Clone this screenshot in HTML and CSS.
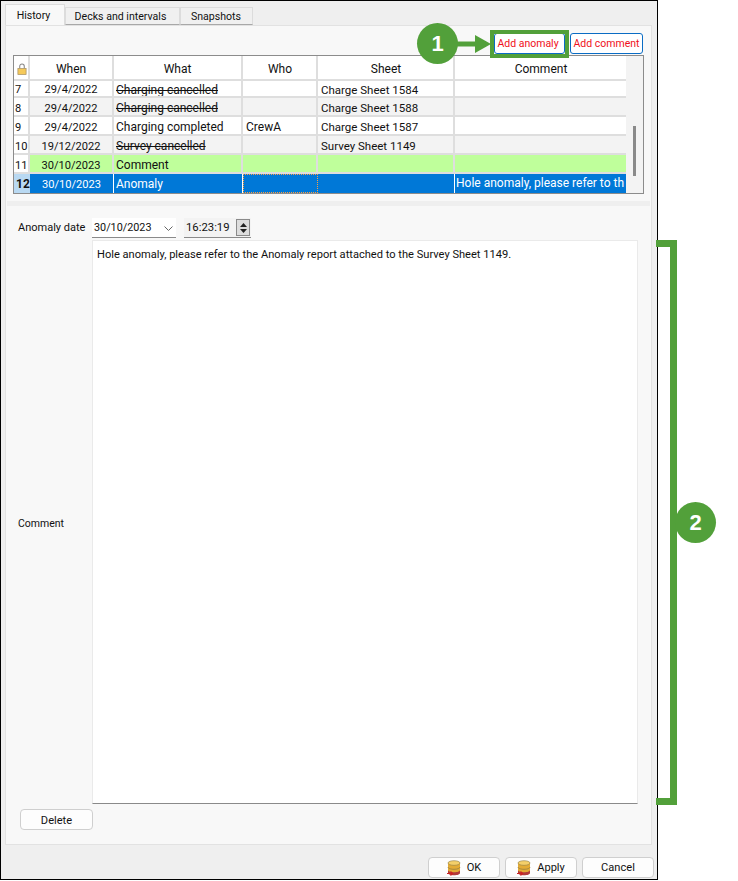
FILE: index.html
```html
<!DOCTYPE html>
<html lang="en">
<head>
<meta charset="utf-8">
<title>History</title>
<link rel="stylesheet" href="styles.css">
</head>
<body>
<div class="window">
  <div class="tabs">
    <div class="tab active">History</div>
    <div class="tab decks">Decks and intervals</div>
    <div class="tab snaps">Snapshots</div>
  </div>
  <div class="pane">
    <div class="top">
      <div class="actions">
        <button class="act anomaly">Add anomaly</button>
        <button class="act">Add comment</button>
      </div>
      <div class="table">
        <div class="grid">
          <div class="row head">
            <div class="c idx lock">
              <svg width="10" height="12" viewBox="0 0 11 13"><path d="M3 6V3.500a2.500 2.500 0 0 1 5 0V6" fill="none" stroke="#8a8a8a" stroke-width="1.200"/><rect x="1" y="6" width="9" height="6.500" fill="#f5c95a" stroke="#a89060" stroke-width=".8"/></svg>
            </div>
            <div class="c when">When</div><div class="c what">What</div><div class="c who">Who</div><div class="c sheet">Sheet</div><div class="c com">Comment</div>
          </div>
          <div class="row first">
            <div class="c idx">7</div><div class="c when">29/4/2022</div><div class="c what"><s>Charging cancelled</s></div><div class="c who"></div><div class="c sheet">Charge Sheet 1584</div><div class="c com"></div>
          </div>
          <div class="row alt">
            <div class="c idx">8</div><div class="c when">29/4/2022</div><div class="c what"><s>Charging cancelled</s></div><div class="c who"></div><div class="c sheet">Charge Sheet 1588</div><div class="c com"></div>
          </div>
          <div class="row">
            <div class="c idx">9</div><div class="c when">29/4/2022</div><div class="c what">Charging completed</div><div class="c who">CrewA</div><div class="c sheet">Charge Sheet 1587</div><div class="c com"></div>
          </div>
          <div class="row alt">
            <div class="c idx">10</div><div class="c when">19/12/2022</div><div class="c what"><s>Survey cancelled</s></div><div class="c who"></div><div class="c sheet">Survey Sheet 1149</div><div class="c com"></div>
          </div>
          <div class="row green">
            <div class="c idx">11</div><div class="c when">30/10/2023</div><div class="c what">Comment</div><div class="c who"></div><div class="c sheet"></div><div class="c com"></div>
          </div>
          <div class="row sel">
            <div class="c idx">12</div><div class="c when">30/10/2023</div><div class="c what">Anomaly</div><div class="c who focus"></div><div class="c sheet"></div><div class="c com clip">Hole anomaly, please refer to th</div>
          </div>
        </div>
        <div class="scroll"><div class="thumb"></div></div>
      </div>
    </div>
    <div class="splitter"></div>
    <div class="form">
      <div class="daterow">
        <span class="lbl date-lbl">Anomaly date</span>
        <div class="field date">30/10/2023
          <svg class="chev" width="9" height="5" viewBox="0 0 9 5"><path d="M.5.500l4 4 4-4" fill="none" stroke="#666"/></svg>
        </div>
        <div class="field time">16:23:19
          <div class="spin"><svg width="7" height="4" viewBox="0 0 7 4"><path d="M3.500 0L7 4H0z" fill="#222"/></svg><svg width="7" height="4" viewBox="0 0 7 4"><path d="M0 0h7L3.500 4z" fill="#222"/></svg></div>
        </div>
      </div>
      <div class="commentrow">
        <span class="lbl com-lbl">Comment</span>
        <div class="text">Hole anomaly, please refer to the Anomaly report attached to the Survey Sheet 1149.</div>
      </div>
      <button class="btn delete">Delete</button>
    </div>
  </div>
  <div class="footer">
    <button class="btn foot">
      <svg width="15" height="16" viewBox="0 0 15 16"><path d="M1 3v10c0 1.300 2.800 2.300 6 2.300s6-1 6-2.300V3z" fill="#b23a3a"/><path d="M1 3v7c0 1.300 2.800 2.300 6 2.300s6-1 6-2.300V3z" fill="#e3ab35"/><ellipse cx="7" cy="3" rx="6" ry="2.300" fill="#f4cf6a" stroke="#8d7a45" stroke-width=".6"/><path d="M1 7c0 1.300 2.800 2.300 6 2.300s6-1 6-2.300" fill="none" stroke="#8d7a45" stroke-width=".7"/><path d="M0 13.500h5M3.500 11.500l2.200 2-2.200 2" fill="none" stroke="#c22" stroke-width="1.100"/></svg>
      OK
    </button>
    <button class="btn foot">
      <svg width="15" height="16" viewBox="0 0 15 16"><path d="M1 3v10c0 1.300 2.800 2.300 6 2.300s6-1 6-2.300V3z" fill="#b23a3a"/><path d="M1 3v7c0 1.300 2.800 2.300 6 2.300s6-1 6-2.300V3z" fill="#e3ab35"/><ellipse cx="7" cy="3" rx="6" ry="2.300" fill="#f4cf6a" stroke="#8d7a45" stroke-width=".6"/><path d="M1 7c0 1.300 2.800 2.300 6 2.300s6-1 6-2.300" fill="none" stroke="#8d7a45" stroke-width=".7"/><path d="M0 13.500h5M3.500 11.500l2.200 2-2.200 2" fill="none" stroke="#c22" stroke-width="1.100"/></svg>
      Apply
    </button>
    <button class="btn foot">Cancel</button>
  </div>

  <div class="note arrow">
    <svg width="35" height="18" viewBox="0 0 35 18"><path d="M0 6.500h18V0l16 9-16 9v-6.500H0z" fill="#52a03a"/></svg>
  </div>
  <div class="note badge one">1</div>
  <div class="note hilite"></div>
  <div class="note bracket"></div>
  <div class="note badge two">2</div>
</div>
</body>
</html>
```
FILE: styles.css
```css
* { box-sizing: border-box; }
html, body { margin: 0; background: #fff; }
body { width: 738px; height: 881px; overflow: hidden; font-family: Roboto, sans-serif; font-size: 11.1px; color: #111; }
button { white-space: nowrap; }
.window { position: relative; width: 658px; height: 880px; background: #efefef; border: 1px solid #000; padding: 3px 5px 0 4px; display: flex; flex-direction: column; }
.tabs { display: flex; height: 21px; align-items: flex-end; position: relative; z-index: 1; font-size: 10.6px; }
.tab { height: 18px; background: #f0f0f0; border: 1px solid #dcdcdc; border-bottom: 1px solid #a8a8a8; line-height: 17px; text-align: center; }
.tab.active { width: 60px; height: 21px; background: #f8f8f8; border-bottom: 0; line-height: 21px; padding-right: 3px; }
.tab.decks { width: 115px; padding-right: 4px; }
.tab.snaps { width: 73px; padding-right: 1px; }
.pane { height: 820px; background: #f8f8f8; border: 1px solid #e2e2e2; display: flex; flex-direction: column; }
.top { height: 174px; padding: 7px 7px 0 7px; flex: none; }
.actions { height: 22px; display: flex; justify-content: flex-end; gap: 5px; margin-right: 1px; }
.act { height: 21px; padding: 0; width: 73px; background: #fff; border: 1px solid #0a6cc4; border-radius: 3px; color: #f01020; font: inherit; font-size: 10.5px; }
.act.anomaly { width: 71px; padding-right: 3px; }
.table { height: 139px; border: 1px solid #8c8c8c; background: #fff; display: flex; }
.grid { width: 612px; flex: none; }
.row { display: grid; grid-template-columns: 16px 84px 129px 75px 137px 171px; height: 19px; }
.row.first { height: 17px; }
.row.first .c { height: 17px; }
.row.head { height: 25px; }
.row.alt { background: #f3f3f3; }
.row.green { background: #bfff9b; }
.row.sel { background: #0078d7; color: #fff; }
.c { border-right: 2px solid #dedede; border-bottom: 2px solid #dedede; padding: 0 2px 0 3px; line-height: 21px; white-space: nowrap; overflow: hidden; font-size: 12px; }
.row.first .c { line-height: 18px; }
.row.head .c { text-align: center; line-height: 27px; font-size: 12px; }
.row .com { border-right: 0; }
.c.when { text-align: center; padding: 0; font-size: 11.1px; }
.c.sheet { font-size: 11.5px; }
.c.what { padding-left: 2px; }
.c.idx { padding: 0 0 0 1px; background: #fff; font-size: 11.1px; }
.c.lock { padding: 7px 0 0 3px; line-height: 0; }
.c.lock svg { display: block; }
.row.sel .c { border-bottom: 0; border-right-color: #fff; border-right-width: 1px; }
.row.sel .com { border-right: 0; padding-left: 1px; line-height: 19px; }
.row.sel .idx { background: #b9d9f2; color: #111; font-weight: 700; border-right: 0; padding-left: 2px; font-size: 12px; }
.row.sel .focus { border: 1px dotted #ffa040; }
.scroll { flex: 1; background: #f3f3f3; position: relative; }
.thumb { position: absolute; left: 7px; top: 70px; width: 3px; height: 50px; background: #8a8a8a; }
.splitter { height: 5px; margin-top: 1px; background: #efefef; flex: none; margin-left: 1px; margin-right: 1px; }
.form { flex: 1; position: relative; padding: 12px 13px 0 12px; display: flex; flex-direction: column; }
.daterow { display: flex; height: 22px; flex: none; align-items: flex-start; }
.lbl { color: #111; white-space: nowrap; }
.date-lbl { width: 74px; flex: none; line-height: 20px; font-size: 11px; }
.field { height: 20px; background: #fff; border-bottom: 1px solid #8a8a8a; line-height: 20px; padding-left: 2px; position: relative; }
.date { width: 84px; font-size: 10.8px; }
.chev { position: absolute; right: 3px; top: 8px; }
.time { width: 67px; margin-left: 8px; background: #f3f3f3; font-size: 11.3px; }
.spin { position: absolute; right: 1px; top: 1px; width: 14px; height: 17px; border: 1px solid #8a8a8a; background: #ddd; display: flex; flex-direction: column; align-items: center; justify-content: center; gap: 2px; }
.spin svg { display: block; }
.commentrow { display: flex; height: 564px; flex: none; align-items: center; }
.com-lbl { width: 74px; flex: none; padding-top: 3px; font-size: 10.5px; }
.text { width: 546px; height: 100%; background: #fff; border: 1px solid #eaeaea; border-bottom: 1px solid #8a8a8a; padding: 7px 4px; align-self: stretch; }
.btn { background: #fdfdfd; border: 1px solid #cfcfcf; border-radius: 4px; font: inherit; color: #111; padding: 0; height: 21px; }
.delete { width: 73px; margin: 5px 0 0 2px; flex: none; padding-top: 1px; }
.footer { height: 33px; display: flex; justify-content: flex-end; gap: 5px; padding-top: 12px; margin-right: -2px; }
.foot { width: 72px; height: 21px; display: flex; align-items: center; justify-content: center; gap: 5px; }
.note { position: absolute; }
.badge { width: 41px; height: 41px; border-radius: 50%; background: #52a03a; color: #fff; font: 700 22px/41px "Liberation Sans", sans-serif; text-align: center; }
.badge.one { left: 416px; top: 22px; }
.badge.two { left: 674px; top: 501px; }
.arrow { left: 456px; top: 34px; line-height: 0; }
.hilite { left: 489px; top: 29px; width: 79px; height: 28px; border: 4px solid #52a03a; }
.bracket { left: 655px; top: 239px; width: 21px; height: 565px; border: 7px solid #52a03a; border-left: 0; }
```
